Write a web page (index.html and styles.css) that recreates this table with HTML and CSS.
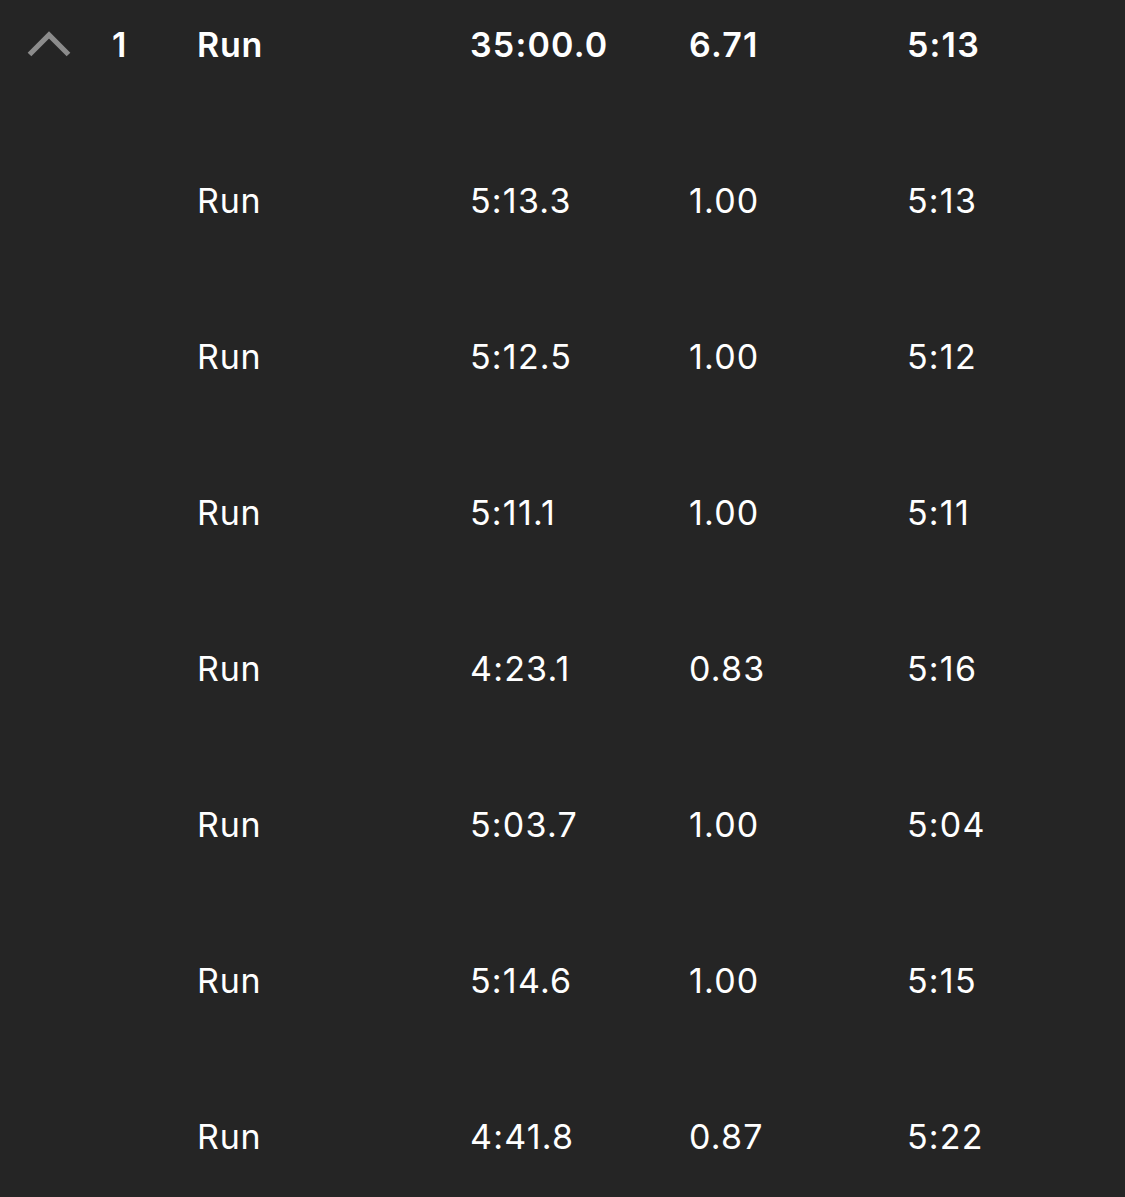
FILE: index.html
```html
<!DOCTYPE html>
<html>
<head>
<meta charset="utf-8">
<link rel="stylesheet" href="styles.css">
</head>
<body>
<div class="laps">
  <div class="row row-head">
    <div class="cell chev"><svg width="44" height="28" viewBox="0 0 44 28"><polyline points="2.5,24.5 22,5 41.5,24.5" fill="none" stroke="#8c8c8c" stroke-width="5.2"/></svg></div>
    <div class="cell num">1</div>
    <div class="cell name">Run</div>
    <div class="cell time">35:00.0</div>
    <div class="cell dist">6.71</div>
    <div class="cell pace">5:13</div>
  </div>
  <div class="row"><div class="cell chev"></div><div class="cell num"></div><div class="cell name">Run</div><div class="cell time">5:13.3</div><div class="cell dist">1.00</div><div class="cell pace">5:13</div></div>
  <div class="row"><div class="cell chev"></div><div class="cell num"></div><div class="cell name">Run</div><div class="cell time">5:12.5</div><div class="cell dist">1.00</div><div class="cell pace">5:12</div></div>
  <div class="row"><div class="cell chev"></div><div class="cell num"></div><div class="cell name">Run</div><div class="cell time">5:11.1</div><div class="cell dist">1.00</div><div class="cell pace">5:11</div></div>
  <div class="row"><div class="cell chev"></div><div class="cell num"></div><div class="cell name">Run</div><div class="cell time">4:23.1</div><div class="cell dist">0.83</div><div class="cell pace">5:16</div></div>
  <div class="row"><div class="cell chev"></div><div class="cell num"></div><div class="cell name">Run</div><div class="cell time">5:03.7</div><div class="cell dist">1.00</div><div class="cell pace">5:04</div></div>
  <div class="row"><div class="cell chev"></div><div class="cell num"></div><div class="cell name">Run</div><div class="cell time">5:14.6</div><div class="cell dist">1.00</div><div class="cell pace">5:15</div></div>
  <div class="row"><div class="cell chev"></div><div class="cell num"></div><div class="cell name">Run</div><div class="cell time">4:41.8</div><div class="cell dist">0.87</div><div class="cell pace">5:22</div></div>
</div>
</body>
</html>
```
FILE: styles.css
```css
html, body {
  margin: 0;
  padding: 0;
  background: #252525;
}
body {
  font-family: Inter, "Noto Sans", sans-serif;
  color: #ffffff;
  font-size: 34px;
  overflow: hidden;
}
.laps {
  padding-left: 27px;
}
.row {
  display: grid;
  grid-template-columns: 85px 85px 273px 219px 218px 1fr;
  align-items: center;
  height: 40px;
  line-height: 40px;
  padding: 58px 0;
}
.time, .dist, .pace {
  letter-spacing: 1.2px;
}
.name {
  letter-spacing: 0.8px;
}
.row-head {
  padding-top: 25px;
  font-weight: 600;
}
.chev {
  display: flex;
  align-items: center;
  height: 40px;
}
.chev svg {
  display: block;
  margin-top: -2px;
}
```
